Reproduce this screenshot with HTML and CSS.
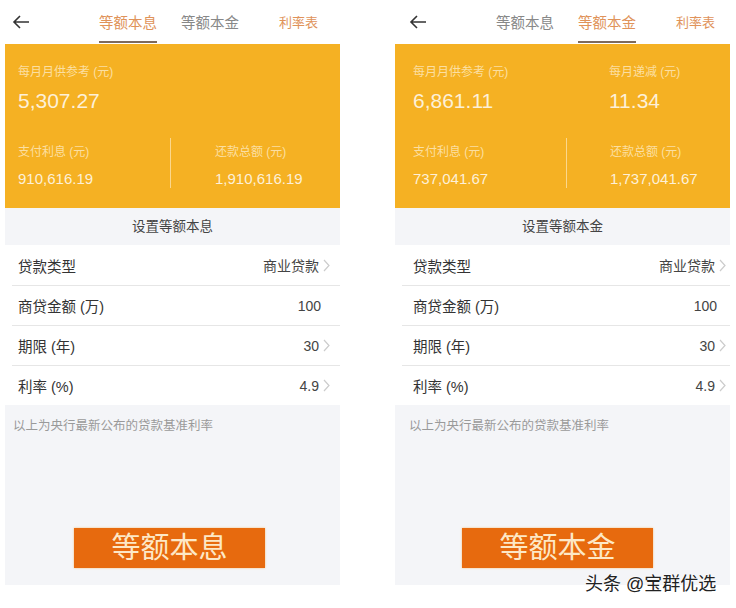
FILE: index.html
```html
<!DOCTYPE html>
<html lang="zh">
<head>
    <meta charset="UTF-8">
    <meta name="viewport" content="width=device-width, initial-scale=1.0">
    <title>房贷计算器</title>
    <link rel="stylesheet" href="styles.css">
</head>
<body>
    <div class="page">
        <div class="phone">
            <div class="header">
                <svg class="back" width="18" height="14" viewBox="0 0 18 14"><path d="M17 7H2M8 1L2 7l6 6" fill="none" stroke="#333" stroke-width="1.6"/></svg>
                <div class="tab active">等额本息</div>
                <div class="tab">等额本金</div>
                <div class="tab rate">利率表</div>
            </div>
            <div class="card">
                <div class="card-top">
                    <div class="col">
                        <div class="card-label">每月月供参考 (元)</div>
                        <div class="big">5,307.27</div>
                    </div>
                </div>
                <div class="card-bottom">
                    <div class="col">
                        <div class="card-label">支付利息 (元)</div>
                        <div class="mid">910,616.19</div>
                    </div>
                    <div class="divider"></div>
                    <div class="col col-right">
                        <div class="card-label">还款总额 (元)</div>
                        <div class="mid">1,910,616.19</div>
                    </div>
                </div>
            </div>
            <div class="set-title">设置等额本息</div>
            <div class="list">
                <div class="row"><span class="label">贷款类型</span><span class="value">商业贷款</span><svg class="chev" width="7" height="13" viewBox="0 0 7 13"><path d="M1 1l5 5.5L1 12" fill="none" stroke="#ccc" stroke-width="1.2"/></svg></div>
                <div class="row"><span class="label">商贷金额 (万)</span><span class="value plain">100</span></div>
                <div class="row"><span class="label">期限 (年)</span><span class="value">30</span><svg class="chev" width="7" height="13" viewBox="0 0 7 13"><path d="M1 1l5 5.5L1 12" fill="none" stroke="#ccc" stroke-width="1.2"/></svg></div>
                <div class="row"><span class="label">利率 (%)</span><span class="value">4.9</span><svg class="chev" width="7" height="13" viewBox="0 0 7 13"><path d="M1 1l5 5.5L1 12" fill="none" stroke="#ccc" stroke-width="1.2"/></svg></div>
            </div>
            <div class="bottom">
                <div class="note">以上为央行最新公布的贷款基准利率</div>
                <div class="big-btn">等额本息</div>
            </div>
        </div>

        <div class="phone phone-b">
            <div class="header">
                <svg class="back" width="18" height="14" viewBox="0 0 18 14"><path d="M17 7H2M8 1L2 7l6 6" fill="none" stroke="#333" stroke-width="1.6"/></svg>
                <div class="tab">等额本息</div>
                <div class="tab active">等额本金</div>
                <div class="tab rate">利率表</div>
            </div>
            <div class="card">
                <div class="card-top">
                    <div class="col">
                        <div class="card-label">每月月供参考 (元)</div>
                        <div class="big">6,861.11</div>
                    </div>
                    <div class="col col-right">
                        <div class="card-label">每月递减 (元)</div>
                        <div class="big">11.34</div>
                    </div>
                </div>
                <div class="card-bottom">
                    <div class="col">
                        <div class="card-label">支付利息 (元)</div>
                        <div class="mid">737,041.67</div>
                    </div>
                    <div class="divider"></div>
                    <div class="col col-right">
                        <div class="card-label">还款总额 (元)</div>
                        <div class="mid">1,737,041.67</div>
                    </div>
                </div>
            </div>
            <div class="set-title">设置等额本金</div>
            <div class="list">
                <div class="row"><span class="label">贷款类型</span><span class="value">商业贷款</span><svg class="chev" width="7" height="13" viewBox="0 0 7 13"><path d="M1 1l5 5.5L1 12" fill="none" stroke="#ccc" stroke-width="1.2"/></svg></div>
                <div class="row"><span class="label">商贷金额 (万)</span><span class="value plain">100</span></div>
                <div class="row"><span class="label">期限 (年)</span><span class="value">30</span><svg class="chev" width="7" height="13" viewBox="0 0 7 13"><path d="M1 1l5 5.5L1 12" fill="none" stroke="#ccc" stroke-width="1.2"/></svg></div>
                <div class="row"><span class="label">利率 (%)</span><span class="value">4.9</span><svg class="chev" width="7" height="13" viewBox="0 0 7 13"><path d="M1 1l5 5.5L1 12" fill="none" stroke="#ccc" stroke-width="1.2"/></svg></div>
            </div>
            <div class="bottom">
                <div class="note">以上为央行最新公布的贷款基准利率</div>
                <div class="big-btn">等额本金</div>
            </div>
        </div>

        <div class="watermark">头条 @宝群优选</div>
    </div>
</body>
</html>
```

FILE: styles.css
```css
body {
    margin: 0;
    background: #fff;
    font-family: "Liberation Sans", "Noto Sans CJK SC", sans-serif;
    color: #333;
}
.page {
    position: relative;
    display: flex;
    gap: 55px;
    padding-left: 5px;
    width: 736px;
    height: 608px;
    box-sizing: border-box;
}
.phone {
    width: 335px;
    height: 585px;
    flex-shrink: 0;
    display: flex;
    flex-direction: column;
    background: #f4f5f8;
}
.header {
    height: 44px;
    background: #fff;
    display: flex;
    align-items: center;
    padding-left: 7px;
    box-sizing: border-box;
}
.phone-b .header {
    padding-left: 14px;
}
.back {
    margin-right: 69px;
}
.tab {
    font-size: 14.5px;
    color: #888;
    height: 44px;
    line-height: 46px;
    margin-right: 24px;
    position: relative;
}
.tab.active {
    color: #e0935a;
}
.tab.active::after {
    content: "";
    position: absolute;
    left: 0;
    right: 0;
    bottom: 1px;
    height: 2px;
    background: #7d6a5c;
}
.tab.rate {
    font-size: 13px;
    color: #e0935a;
    margin-left: 16px;
    margin-right: 0;
}
.card {
    height: 164px;
    background: #f5b123;
    padding: 20px 13px 0;
    box-sizing: border-box;
    color: #fdf0d8;
}
.phone-b .card {
    padding-left: 18px;
}
.card-top, .card-bottom {
    display: flex;
}
.card-bottom {
    margin-top: 30px;
}
.col {
    width: 152px;
    flex-shrink: 0;
}
.col-right {
    width: auto;
    flex: 1;
    margin-left: 44px;
}
.card-top .col-right {
    margin-left: 45px;
}
.phone-b .col {
    width: 153px;
}
.phone-b .col-right {
    width: auto;
    margin-left: 43px;
}
.card-label {
    font-size: 12px;
    line-height: 16px;
    color: rgba(255, 244, 220, 0.7);
}
.big {
    font-size: 21px;
    line-height: 26px;
    margin-top: 8px;
}
.mid {
    font-size: 15px;
    line-height: 20px;
    margin-top: 9px;
}
.divider {
    width: 1px;
    height: 50px;
    margin-top: -6px;
    background: rgba(255, 240, 210, 0.6);
}
.set-title {
    height: 37px;
    line-height: 38px;
    text-align: center;
    font-size: 13.5px;
    color: #444;
}
.list {
    background: #fff;
}
.row {
    height: 40px;
    box-sizing: border-box;
    margin-left: 7px;
    padding: 0 10px 0 6px;
    display: flex;
    align-items: center;
    border-top: 1px solid #e6e6e6;
    font-size: 14.5px;
    color: #333;
}
.row:first-child {
    border-top: none;
}
.phone-b .row {
    padding: 0 4px 0 11px;
}
.label {
    flex: 1;
}
.value {
    font-size: 14px;
    color: #444;
}
.value.plain {
    margin-right: 9px;
}
.chev {
    margin-left: 4px;
}
.bottom {
    flex: 1;
    display: flex;
    flex-direction: column;
}
.note {
    font-size: 12.5px;
    color: #9a9a9a;
    padding: 10px 8px;
}
.phone-b .note {
    padding-left: 14px;
}
.big-btn {
    margin-top: auto;
    margin-bottom: 17px;
    margin-left: 69px;
    width: 191px;
    height: 40px;
    line-height: 40px;
    text-align: center;
    background: #e76a0e;
    color: #fde8c6;
    font-size: 29px;
    box-shadow: 0 0 2px #f7c27a;
}
.phone-b .big-btn {
    margin-left: 67px;
}
.watermark {
    position: absolute;
    left: 585px;
    top: 569px;
    font-size: 18px;
    color: #222;
    text-shadow: 0 0 2px #fff, 0 0 2px #fff;
}
```
